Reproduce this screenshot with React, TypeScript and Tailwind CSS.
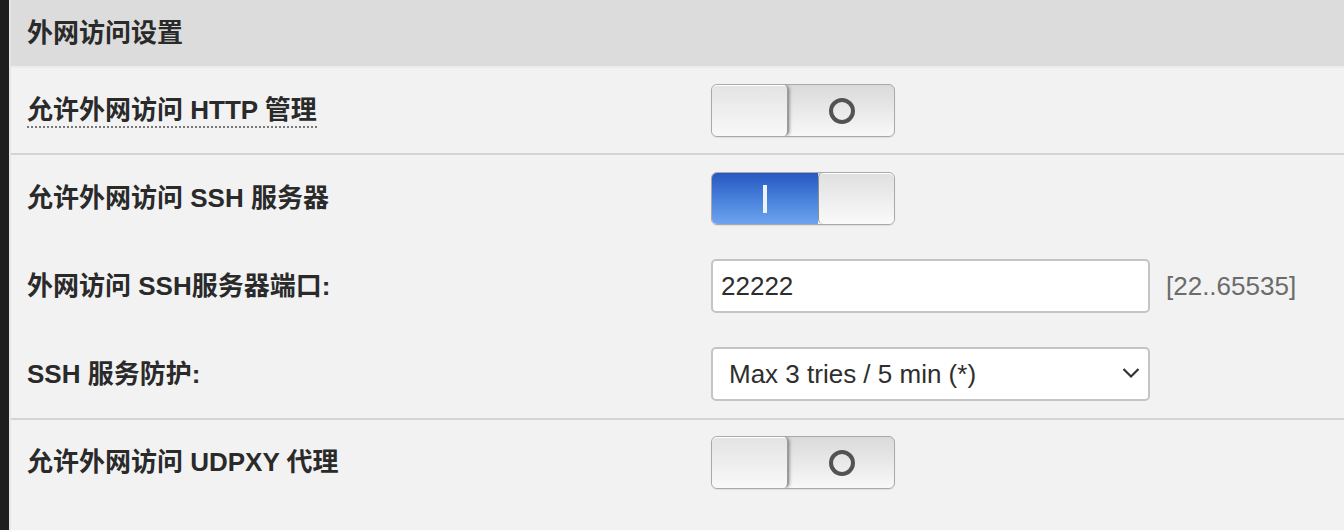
import React, { useState } from 'react';

const font = { fontFamily: '"Liberation Sans", Arial, "Noto Sans CJK SC", sans-serif' };

function Toggle({ on, onChange }: { on: boolean; onChange: (v: boolean) => void }) {
  return (
    <button
      type="button"
      onClick={() => onChange(!on)}
      className="flex h-[53px] w-[184px] overflow-hidden rounded-[6px] border border-[#a9a9a9] bg-gradient-to-b from-[#dadada] to-[#f8f8f8] shadow-[0_1px_1px_rgba(0,0,0,0.08)]"
    >
      {on ? (
        <>
          <div className="flex h-full w-[106px] items-center justify-center bg-gradient-to-b from-[#2957c2] via-[#4680da] to-[#6ea3ee]">
            <div className="h-[28px] w-[4px] bg-[#eef3fb]" />
          </div>
          <div className="h-full flex-1 rounded-[5px] border-l border-[#8d8d8d] bg-gradient-to-b from-[#e0e0e0] to-[#fafafa] shadow-[inset_0_1px_0_#fff]" />
        </>
      ) : (
        <>
          <div className="h-full w-[77px] rounded-[5px] border-r-2 border-[#9a9a9a] bg-gradient-to-b from-[#e3e3e3] to-[#f9f9f9] shadow-[1px_0_3px_rgba(0,0,0,0.3),inset_0_1px_0_#fff]" />
          <div className="flex h-full flex-1 items-center justify-center">
            <div className="h-[26px] w-[26px] rounded-full border-4 border-[#535353]" />
          </div>
        </>
      )}
    </button>
  );
}

function Row({ label, dotted, className, children }: { label: string; dotted?: boolean; className?: string; children: React.ReactNode }) {
  return (
    <div className={'flex items-center pl-4 ' + (className || 'py-[17px]')}>
      <div className="w-[684px] shrink-0">
        <span
          className={
            'text-[26px] font-bold text-[#2a2a2a] ' +
            (dotted ? 'border-b-2 border-dotted border-[#777] pb-[1px]' : '')
          }
        >
          {label}
        </span>
      </div>
      {children}
    </div>
  );
}

export default function App() {
  const [http, setHttp] = useState(false);
  const [ssh, setSsh] = useState(true);
  const [udpxy, setUdpxy] = useState(false);
  const [port, setPort] = useState('22222');
  const [guard, setGuard] = useState('3');

  return (
    <div className="flex h-[530px] w-full overflow-hidden bg-[#1e1e1e]" style={font}>
      <div className="ml-[9px] flex-1 border-l-2 border-[#e6e6e6] bg-[#f2f2f2]">
        <div className="flex h-[68px] items-center border-b-2 border-[#ececec] bg-[#dcdcdc] pl-4">
          <h2 className="text-[26px] font-bold text-[#2a2a2a]">外网访问设置</h2>
        </div>

        <div className="border-b-2 border-[#d4d4d4]">
          <Row label="允许外网访问 HTTP 管理" dotted className="py-[16px]">
            <Toggle on={http} onChange={setHttp} />
          </Row>
        </div>

        <div className="border-b-2 border-[#d4d4d4]">
          <Row label="允许外网访问 SSH 服务器">
            <Toggle on={ssh} onChange={setSsh} />
          </Row>
          <Row label="外网访问 SSH服务器端口:">
            <input
              value={port}
              onChange={(e) => setPort(e.target.value)}
              className="h-[54px] w-[439px] rounded-[5px] border-2 border-[#c4c4c4] bg-white px-[8px] text-[26px] text-[#2e2e2e] outline-none"
            />
            <span className="ml-[16px] text-[26px] text-[#6b6b6b]">[22..65535]</span>
          </Row>
          <Row label="SSH 服务防护:">
            <div className="relative">
              <select
                value={guard}
                onChange={(e) => setGuard(e.target.value)}
                className="h-[54px] w-[439px] appearance-none rounded-[5px] border-2 border-[#c4c4c4] bg-white pl-[16px] text-[26px] text-[#2e2e2e] outline-none"
              >
                <option value="0">Disabled</option>
                <option value="3">Max 3 tries / 5 min (*)</option>
                <option value="5">Max 5 tries / 5 min</option>
              </select>
              <svg
                className="pointer-events-none absolute right-[10px] top-[20px]"
                width="18"
                height="12"
                viewBox="0 0 18 12"
                fill="none"
              >
                <path d="M1.5 2 L9 9.5 L16.5 2" stroke="#333" strokeWidth="2.2" />
              </svg>
            </div>
          </Row>
        </div>

        <div>
          <Row label="允许外网访问 UDPXY 代理" className="pt-[16px]">
            <Toggle on={udpxy} onChange={setUdpxy} />
          </Row>
        </div>
      </div>
    </div>
  );
}
